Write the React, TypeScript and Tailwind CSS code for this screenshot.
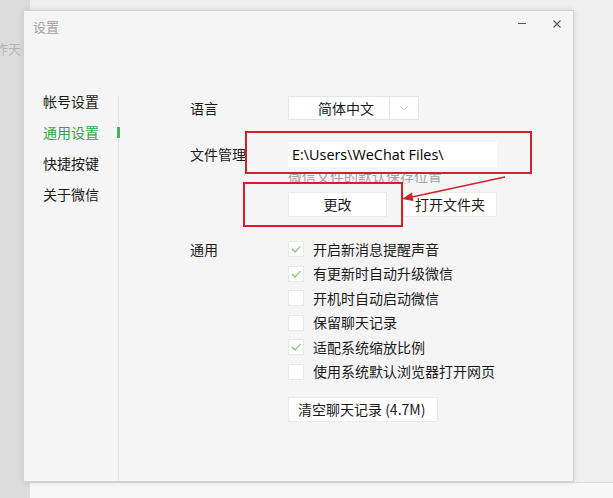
import React from "react";

const cjk = { fontFamily: '"Noto Sans CJK SC", "Noto Sans", sans-serif' };

const navItems = ["帐号设置", "通用设置", "快捷按键", "关于微信"];

const options = [
  { label: "开启新消息提醒声音", checked: true },
  { label: "有更新时自动升级微信", checked: true },
  { label: "开机时自动启动微信", checked: false },
  { label: "保留聊天记录", checked: false },
  { label: "适配系统缩放比例", checked: true },
  { label: "使用系统默认浏览器打开网页", checked: false },
];

const CheckBox = ({ checked }: { checked: boolean }) => (
  <div className="flex h-[16px] w-[16px] items-center justify-center border border-[#e9e9e9] bg-white">
    {checked && (
      <svg width="12" height="12" viewBox="0 0 12 12">
        <polyline
          points="2,6 5,9 10.5,3"
          fill="none"
          stroke="#62c262"
          strokeWidth="1.1"
        />
      </svg>
    )}
  </div>
);

const Button = ({ children, className }: { children: React.ReactNode; className: string }) => (
  <div
    className={
      "flex h-[25px] items-center border border-[#ebebeb] bg-white text-[14px] text-[#1a1a1a] " +
      className
    }
  >
    {children}
  </div>
);

const App = () => {
  return (
    <div
      className="relative flex h-[498px] w-[613px] overflow-hidden bg-[#f0f0f0]"
      style={cjk}
    >
      {/* desktop behind the window */}
      <div className="h-full w-[30px] overflow-hidden bg-[#dcdcdc] pt-[41px]">
        <div className="-ml-[5px] whitespace-nowrap text-[13px] leading-[16px] text-[#b4b4b4]">
          昨天
        </div>
      </div>
      <div className="flex flex-1 flex-col">
        <div className="h-[482px] bg-[#efefef]" />
        <div className="flex-1 border-t border-[#dedede] bg-[#f7f7f7]" />
      </div>

      {/* settings window */}
      <div className="absolute left-[23px] top-[10px] flex h-[472px] w-[551px] flex-col border border-[#d2d2d2] bg-[#f5f5f5] shadow-[0_0_6px_rgba(0,0,0,0.12)]">
        <div className="relative h-[81px] pl-[9px] pt-[8px]">
          <div className="text-[13px] leading-[16px] text-[#a0a0a0]">设置</div>
          <div className="absolute left-[494px] top-[12px] h-px w-[8px] bg-[#555]" />
          <svg
            className="absolute left-[529px] top-[9px]"
            width="8"
            height="8"
            viewBox="0 0 8 8"
          >
            <path d="M0.5 0.5 L7.5 7.5 M7.5 0.5 L0.5 7.5" stroke="#555" strokeWidth="1.1" />
          </svg>
        </div>

        <div className="flex flex-1">
          <div className="-mt-[1px] flex w-[94px] flex-col gap-[11px] pl-[19px]">
            {navItems.map((item, i) => (
              <div
                key={item}
                className={
                  "h-[20px] text-[14px] leading-[20px] " +
                  (i === 1 ? "text-[#2aa845]" : "text-[#1a1a1a]")
                }
              >
                {item}
              </div>
            ))}
          </div>
          <div className="relative mt-[4px] w-px bg-[#e3e3e3]">
            <div className="absolute -left-[1px] top-[31px] h-[11px] w-[3px] bg-[#3bb94f]" />
          </div>

          <div className="flex flex-1 flex-col pl-[71px] pt-[4px] text-[14px] text-[#1a1a1a]">
            <div className="flex h-[24px] items-center">
              <div className="w-[98px]">语言</div>
              <div className="flex h-[24px] w-[131px] border border-[#e6e6e6] bg-white">
                <div className="flex w-[101px] items-center border-r border-[#e6e6e6] pl-[29px]">
                  简体中文
                </div>
                <div className="flex flex-1 items-center justify-center">
                  <svg width="10" height="6" viewBox="0 0 10 6">
                    <polyline points="1,1 5,5 9,1" fill="none" stroke="#c4c4c4" strokeWidth="1" />
                  </svg>
                </div>
              </div>
            </div>

            <div className="mt-[22px] flex">
              <div className="flex h-[25px] w-[98px] items-center">文件管理</div>
              <div className="flex flex-col">
                <div
                  className="flex h-[25px] w-[209px] items-center bg-white pl-[4px] text-[14.4px] text-black"
                  style={{ fontFamily: '"Open Sans", "Noto Sans", sans-serif' }}
                >
                  E:\Users\WeChat Files\
                </div>
                <div className="mt-[7px] h-[9px] overflow-hidden">
                  <div className="-mt-[6px] text-[14px] leading-[16px] text-[#a3a3a3]">
                    微信文件的默认保存位置
                  </div>
                </div>
                <div className="mt-[9px] flex gap-[16px]">
                  <Button className="w-[99px] justify-center">更改</Button>
                  <Button className="w-[94px] justify-center">打开文件夹</Button>
                </div>
              </div>
            </div>

            <div className="mt-[20px] flex">
              <div className="flex h-[24.5px] w-[98px] items-center">通用</div>
              <div className="flex flex-col">
                {options.map((o) => (
                  <div key={o.label} className="flex h-[24.5px] items-center gap-[9px]">
                    <CheckBox checked={o.checked} />
                    <span>{o.label}</span>
                  </div>
                ))}
                <Button className="mt-[13px] w-[150px] pl-[9px]">清空聊天记录 (4.7M)</Button>
              </div>
            </div>
          </div>
        </div>
      </div>

      {/* red annotations */}
      <div className="pointer-events-none absolute left-[245px] top-[131px] h-[43px] w-[287px] border-2 border-[#d4202a]" />
      <div className="pointer-events-none absolute left-[243px] top-[182px] h-[45px] w-[160px] border-2 border-[#d4202a]" />
      <svg
        className="pointer-events-none absolute left-0 top-0"
        width="613"
        height="498"
        viewBox="0 0 613 498"
      >
        <line x1="505" y1="177" x2="412" y2="197" stroke="#d4202a" strokeWidth="1.3" />
        <polygon points="402,199 413.6,201 411.9,192.6" fill="#d4202a" />
      </svg>
    </div>
  );
};

export default App;
